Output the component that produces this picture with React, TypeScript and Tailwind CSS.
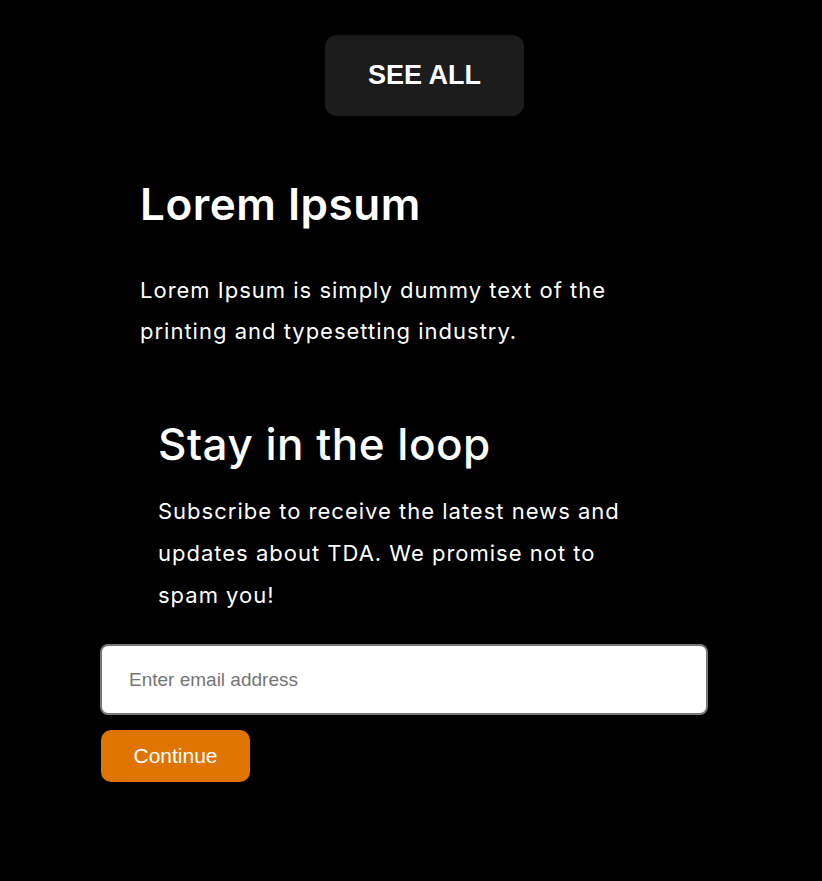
import React from 'react';

const App: React.FC = () => {
  return (
    <div className="min-h-screen bg-black text-white font-['Inter',sans-serif]">
      <div className="flex justify-center pt-[35px]">
        <button className="ml-[27px] w-[199px] h-[81px] rounded-xl bg-[#1c1c1c] text-[27px] font-bold font-['Liberation_Sans',Arial,sans-serif] text-white">
          SEE ALL
        </button>
      </div>

      <div className="pl-[140px] mt-[61px]">
        <h2 className="text-[44px] leading-[54px] font-semibold tracking-[0.5px]">Lorem Ipsum</h2>
        <p className="mt-[39px] w-[500px] text-[22px] leading-[41px] tracking-[1px]">
          Lorem Ipsum is simply dummy text of the printing and typesetting industry.
        </p>
      </div>

      <div className="pl-[158px] mt-[66px]">
        <h3 className="text-[44px] leading-[52px] font-medium tracking-[0.5px]">Stay in the loop</h3>
        <p className="mt-[20px] w-[490px] text-[22px] leading-[42px] tracking-[1px]">
          Subscribe to receive the latest news and updates about TDA. We promise not to spam you!
        </p>
      </div>

      {/* Subscribe form */}
      <form className="pl-[100px] mt-[28px] flex flex-col items-start gap-[15px]" onSubmit={(e) => e.preventDefault()}>
        <input
          type="email"
          placeholder="Enter email address"
          className="w-[608px] h-[71px] rounded-lg border-2 border-[#767676] bg-white px-[27px] text-[19px] text-black placeholder:text-[#757575] font-['Liberation_Sans',Arial,sans-serif] outline-none"
        />
        <button
          type="submit"
          className="ml-px w-[149px] h-[52px] rounded-[10px] bg-[#df7500] text-white text-[21px] font-['Liberation_Sans',Arial,sans-serif]"
        >
          Continue
        </button>
      </form>
    </div>
  );
};

export default App;
